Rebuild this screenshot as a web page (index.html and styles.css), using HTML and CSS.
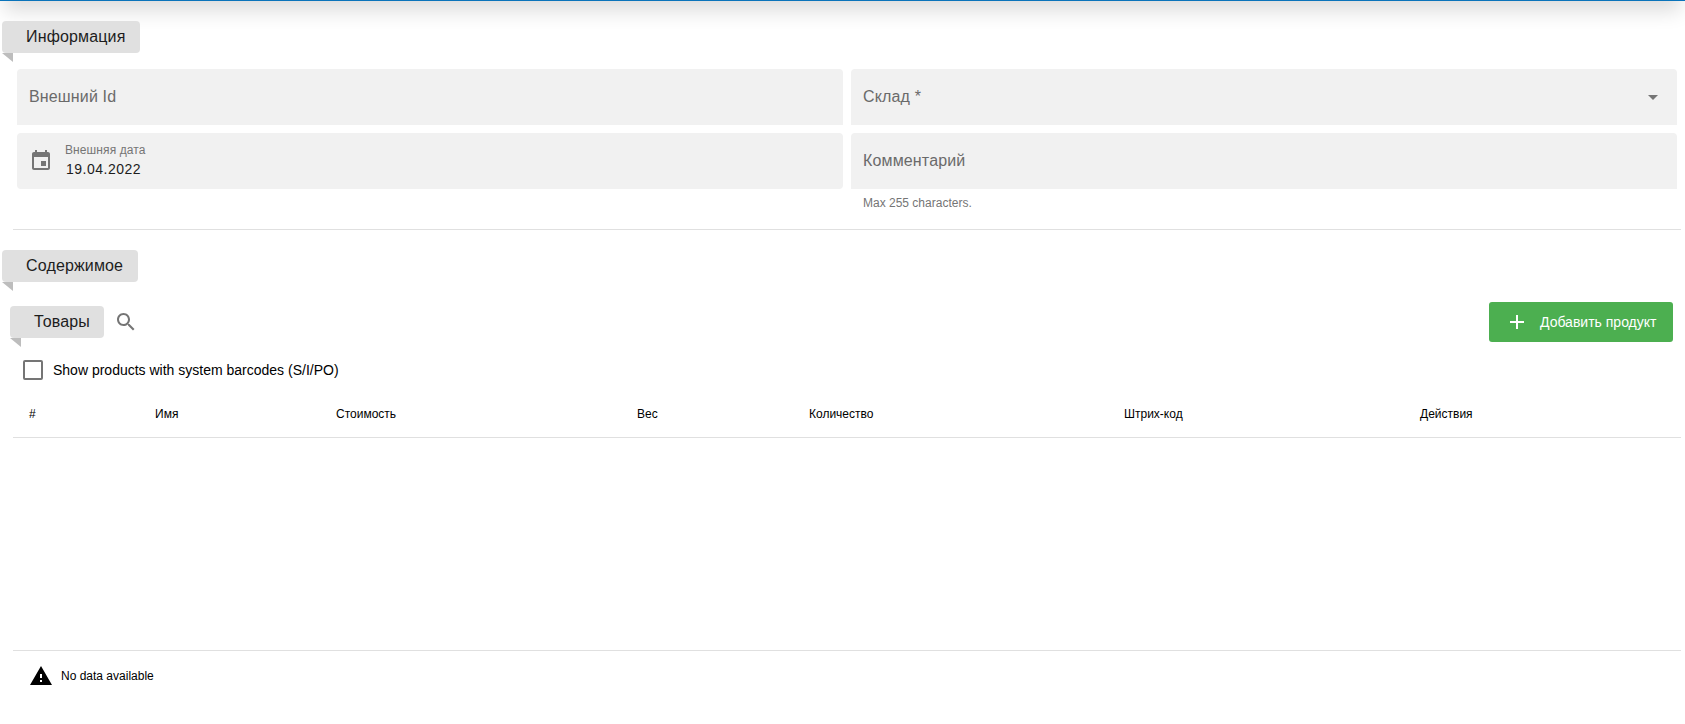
FILE: index.html
```
<!DOCTYPE html>
<html lang="ru">
<head>
    <meta charset="UTF-8">
    <meta name="viewport" content="width=device-width, initial-scale=1.0">
    <title>Информация</title>
    <link rel="stylesheet" href="styles.css">
</head>
<body>
    <header class="topbar"></header>
    <main class="page">
        <section class="info">
            <h2 class="tag tag-info">Информация</h2>
            <form class="fields">
                <label class="field">
                    <span class="field-label">Внешний Id</span>
                </label>
                <label class="field field-select">
                    <span class="field-label">Склад *</span>
                    <svg class="icon" viewBox="0 0 24 24"><path d="M7 10l5 5 5-5z"/></svg>
                </label>
                <label class="field field-date">
                    <svg class="icon" viewBox="0 0 24 24"><path d="M17 12h-5v5h5v-5zM16 1v2H8V1H6v2H5c-1.11 0-1.99.9-1.99 2L3 19c0 1.1.89 2 2 2h14c1.1 0 2-.9 2-2V5c0-1.1-.9-2-2-2h-1V1h-2zm3 18H5V8h14v11z"/></svg>
                    <span class="field-value">
                        <span class="small-label">Внешняя дата</span>
                        <span class="date">19.04.2022</span>
                    </span>
                </label>
                <div>
                    <label class="field">
                        <span class="field-label">Комментарий</span>
                    </label>
                    <div class="hint">Max 255 characters.</div>
                </div>
            </form>
        </section>

        <section class="content">
            <h2 class="tag tag-content">Содержимое</h2>
            <div class="toolbar">
                <h3 class="tag tag-goods">Товары</h3>
                <svg class="icon icon-search" viewBox="0 0 24 24"><path d="M15.5 14h-.79l-.28-.27C15.41 12.59 16 11.11 16 9.5 16 5.91 13.09 3 9.5 3S3 5.91 3 9.5 5.91 16 9.5 16c1.61 0 3.09-.59 4.23-1.57l.27.28v.79l5 4.99L20.49 19l-4.99-5zm-6 0C7.01 14 5 11.99 5 9.5S7.01 5 9.5 5 14 7.01 14 9.5 11.99 14 9.5 14z"/></svg>
                <button class="btn-add" type="button">
                    <svg class="icon" viewBox="0 0 24 24"><path d="M19 13h-6v6h-2v-6H5v-2h6V5h2v6h6v2z"/></svg>
                    <span>Добавить продукт</span>
                </button>
            </div>
            <div class="checkbox">
                <span class="box"></span>
                <span class="checkbox-label">Show products with system barcodes (S/I/PO)</span>
            </div>
            <div class="table-body">
                <table class="products">
                    <thead>
                        <tr>
                            <th class="col-num">#</th>
                            <th class="col-name">Имя</th>
                            <th class="col-cost">Стоимость</th>
                            <th class="col-weight">Вес</th>
                            <th class="col-count">Количество</th>
                            <th class="col-barcode">Штрих-код</th>
                            <th class="col-actions">Действия</th>
                        </tr>
                    </thead>
                </table>
            </div>
            <div class="no-data">
                <svg class="icon" viewBox="0 0 24 24"><path d="M1 21h22L12 2 1 21zm12-3h-2v-2h2v2zm0-4h-2v-4h2v4z"/></svg>
                <span>No data available</span>
            </div>
        </section>
    </main>
</body>
</html>
```
FILE: styles.css
```
* {
    box-sizing: border-box;
}
body {
    font-family: "Liberation Sans", Arial, sans-serif;
    font-size: 14px;
    margin: 0;
    color: #000;
    background: #fff;
    overflow: hidden;
}
/* only the bottom edge and the shadow of the bar stay visible */
.topbar {
    height: 50px;
    margin-top: -49px;
    background: #0a73ba;
    box-shadow: 0 14px 20px -4px rgba(0, 0, 0, 0.14);
}
.page {
    padding: 20px 4px 0 13px;
}
.icon {
    width: 24px;
    height: 24px;
    flex: none;
    fill: #757575;
}

/* ribbon style headings */
.tag {
    position: relative;
    width: 138px;
    height: 32px;
    margin: 0 0 0 -11px;
    padding-left: 24px;
    border-radius: 4px;
    background: #e0e0e0;
    color: #1d1d1d;
    font-size: 16px;
    font-weight: 400;
    line-height: 31px;
    letter-spacing: 0.15px;
    white-space: nowrap;
}
.tag::after {
    content: "";
    position: absolute;
    left: 0;
    top: 32px;
    border-style: solid;
    border-width: 0 11px 9px 0;
    border-color: transparent #bdbdbd transparent transparent;
}
.tag-content {
    width: 136px;
}
.tag-goods {
    width: 94px;
    margin: 0;
}

.info {
    height: 209px;
    border-bottom: 1px solid #e0e0e0;
}
.fields {
    display: grid;
    grid-template-columns: 1fr 1fr;
    gap: 8px;
    padding: 16px 4px 0;
}
.field {
    display: flex;
    align-items: center;
    height: 56px;
    padding: 0 12px;
    border-radius: 4px 4px 0 0;
    background: #f1f1f1;
}
.field-label {
    color: #6a6a6a;
    font-size: 16px;
    line-height: 20px;
    letter-spacing: 0.15px;
}
.field-select {
    justify-content: space-between;
}
.field-date {
    border-radius: 4px;
}
.field-value {
    display: flex;
    flex-direction: column;
    margin: -2px 0 0 12px;
}
.small-label {
    color: #757575;
    font-size: 12px;
    line-height: 18px;
    letter-spacing: 0.1px;
}
.date {
    padding-left: 1px;
    line-height: 20px;
    letter-spacing: 0.5px;
    color: #1d1d1d;
}
.hint {
    padding: 7px 12px 0;
    color: #757575;
    font-size: 12px;
    line-height: 14px;
}

.content {
    padding-top: 20px;
}
.toolbar {
    display: flex;
    align-items: center;
    height: 40px;
    margin: 20px 8px 0 -3px;
}
.icon-search {
    margin-left: 10px;
}
.btn-add {
    display: flex;
    align-items: center;
    width: 184px;
    height: 40px;
    margin-left: auto;
    padding: 0 16px;
    border: none;
    border-radius: 3px;
    background: #4caf50;
    color: #fff;
    font-family: inherit;
    font-size: 14px;
    white-space: nowrap;
    cursor: pointer;
}
.btn-add .icon {
    fill: #fff;
    margin-right: 11px;
}
.checkbox {
    display: flex;
    align-items: center;
    height: 20px;
    margin: 18px 0 0 10px;
}
.box {
    width: 20px;
    height: 20px;
    border: 2px solid #757575;
    border-radius: 2px;
}
.checkbox-label {
    margin-left: 10px;
    font-size: 14px;
}

.table-body {
    height: 261px;
    margin-top: 9px;
}
.products {
    width: 100%;
    table-layout: fixed;
    border-spacing: 0;
}
.products th {
    height: 49px;
    padding: 1px 16px 0;
    border-bottom: 1px solid #e0e0e0;
    font-size: 12px;
    font-weight: 400;
    text-align: left;
}
.col-num {
    width: 126px;
}
.col-name {
    width: 181px;
}
.col-cost {
    width: 301px;
}
.col-weight {
    width: 172px;
}
.col-count {
    width: 315px;
}
.col-barcode {
    width: 296px;
}
.no-data {
    display: flex;
    align-items: center;
    height: 50px;
    padding-left: 16px;
    border-top: 1px solid #e0e0e0;
    font-size: 12px;
}
.no-data .icon {
    fill: #000;
    margin-right: 8px;
}
```
